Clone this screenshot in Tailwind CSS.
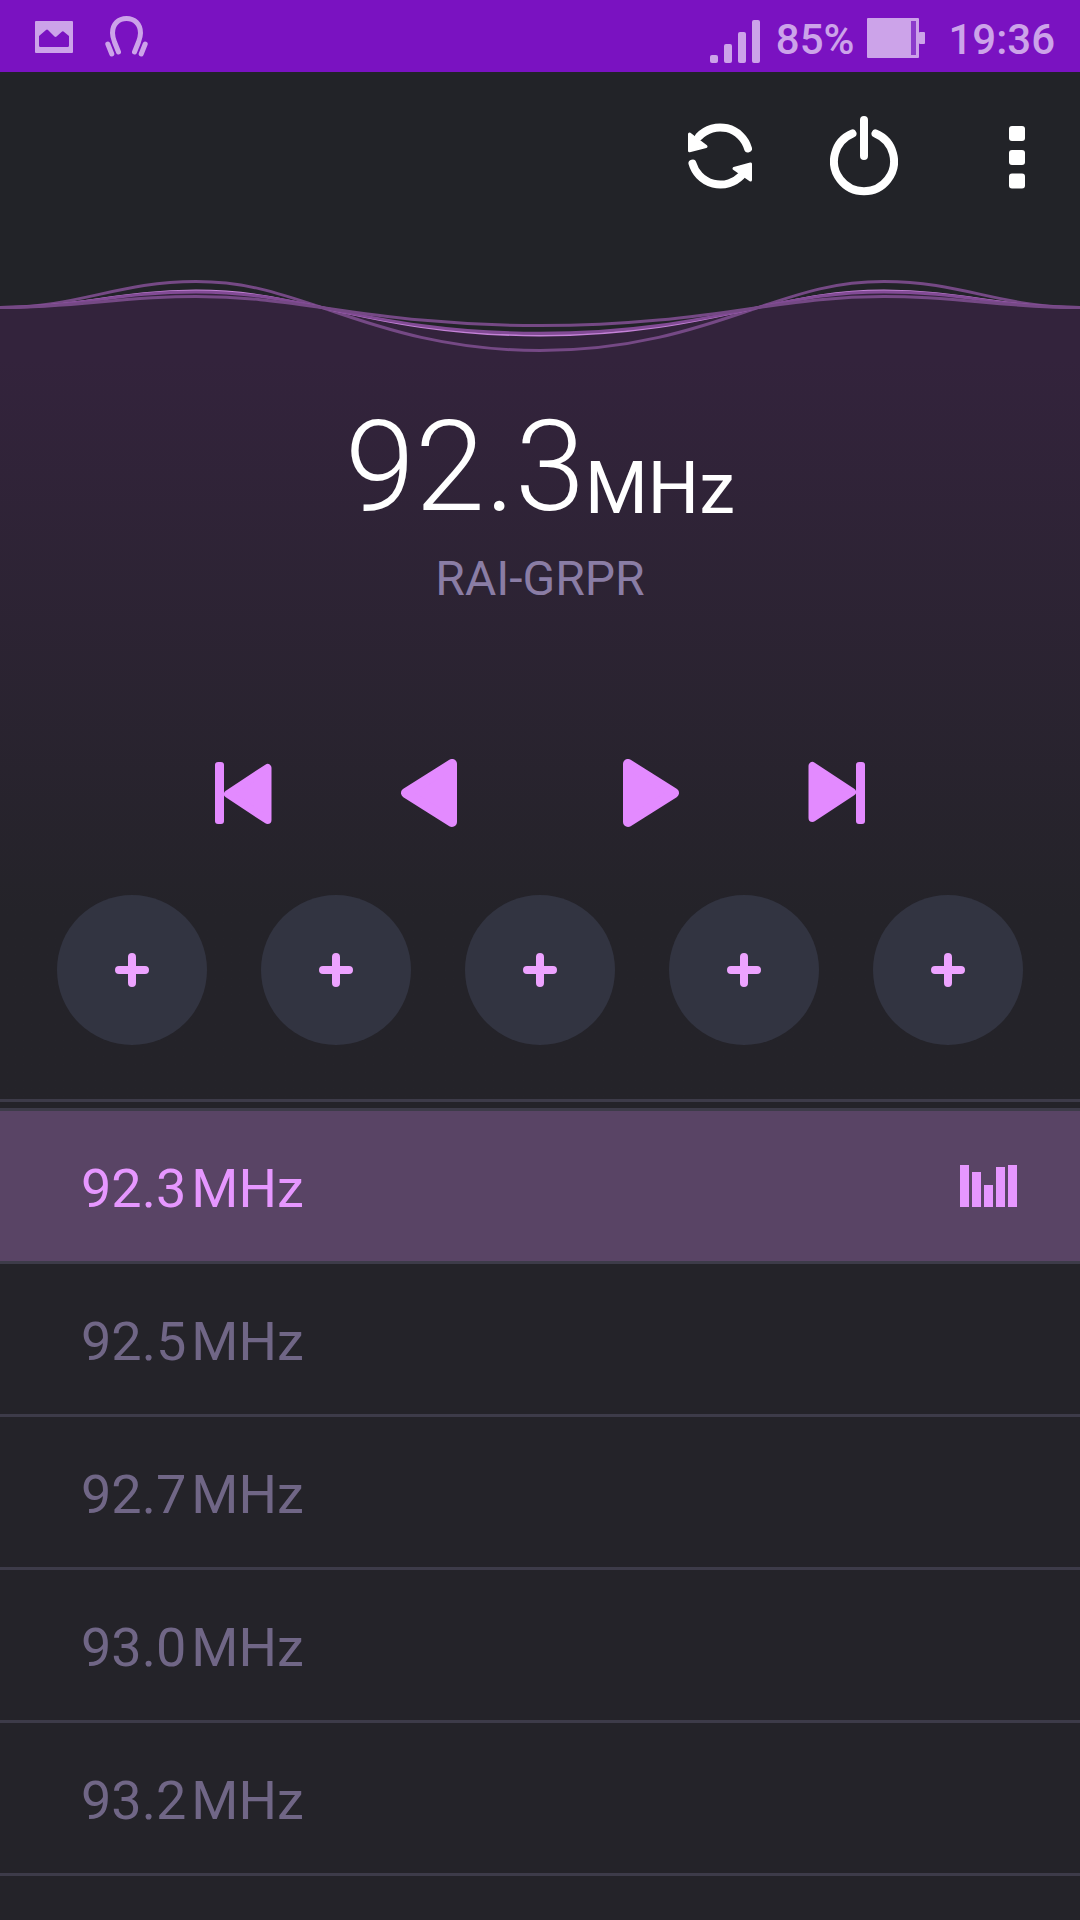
<!DOCTYPE html>
<html lang="en">
<head>
<meta charset="utf-8">
<meta name="viewport" content="width=device-width, initial-scale=1">
<title>FM Radio</title>
<script src="https://cdn.jsdelivr.net/npm/@tailwindcss/browser@4"></script>
</head>
<body class="min-h-screen bg-[#242329] font-[Roboto,sans-serif] text-white">

<!-- Status bar -->
<div class="flex h-[72px] items-center bg-[#7a12c1] pr-[25px] pl-[35px] text-[#cca3e9]">
  <svg class="h-[72px] w-[38px]" viewBox="0 0 38 72" fill="currentColor" aria-hidden="true">
    <path fill-rule="evenodd" d="M1 21H37Q38 21 38 22V52Q38 53 37 53H1Q0 53 0 52V22Q0 21 1 21ZM4 36V45.500Q4 47 5.500 47H32.500Q34 47 34 45.500V36L28.500 31.500Q27.500 31 26.500 32L21.500 36.500Q20.500 37.300 19.500 36.500L13 30Q12 29 11 30Z"/>
  </svg>
  <svg class="ml-8 h-[72px] w-[43px]" viewBox="0 0 43 72" fill="none" stroke="currentColor" stroke-width="5" stroke-linecap="round" aria-hidden="true">
    <path d="M13.500 52L9.500 42Q7.500 36.500 7.500 33C7.500 24 13.500 18.500 21.500 18.500S35.500 24 35.500 33Q35.500 36.500 33.500 42L29.500 52"/>
    <path d="M2.800 44L6.800 54M40.200 44L36.200 54"/>
  </svg>
  <div class="ml-auto flex items-center">
    <svg class="h-[72px] w-[50px]" viewBox="0 0 50 72" fill="currentColor" aria-hidden="true">
      <rect x="0" y="55" width="8" height="8" rx="2"/><rect x="14" y="44" width="8" height="19" rx="2"/><rect x="28" y="32" width="8" height="31" rx="2"/><rect x="42" y="20" width="8" height="43" rx="2"/>
    </svg>
    <span class="ml-4 pt-2 text-[42px] leading-none font-medium">85%</span>
    <svg class="ml-[13px] h-[72px] w-[58px]" viewBox="0 0 58 72" fill="currentColor" aria-hidden="true">
      <rect y="18" width="52" height="40" rx="1"/><rect x="52" y="32" width="6" height="12" rx="1"/><rect x="44" y="21" width="5" height="34" fill="#8b3ccb"/>
    </svg>
    <span class="ml-[23px] pt-2 text-[42px] leading-none font-medium">19:36</span>
  </div>
</div>

<!-- Toolbar -->
<header class="flex h-[188px] items-start justify-end bg-[#222328] pt-10 pr-[55px]">
  <button type="button" aria-label="Rescan stations">
    <svg class="h-[88px] w-16" viewBox="0 0 64 88" fill="none" stroke="#fff" stroke-width="8" stroke-linecap="round" aria-hidden="true">
      <path d="M11 24.500A29 29 0 0 1 60 36.500M4.500 51.500A29 29 0 0 0 53 64"/>
      <path fill="#fff" stroke-width="3" stroke-linejoin="round" d="M1.500 22L18 34.500L1.500 38.800ZM62.500 52V68L46 56.500Z"/>
    </svg>
  </button>
  <button type="button" aria-label="Power" class="ml-[78px]">
    <svg class="h-[88px] w-[68px]" viewBox="0 0 68 88" fill="none" stroke="#fff" stroke-width="8" stroke-linecap="round" aria-hidden="true">
      <path d="M22.500 21.500A30 30 0 1 0 45.500 21.500M34 8V44"/>
    </svg>
  </button>
  <button type="button" aria-label="More options" class="ml-[111px]">
    <svg class="h-[88px] w-4" viewBox="0 0 16 88" fill="#fff" aria-hidden="true">
      <rect y="14" width="16" height="15" rx="3"/><rect y="38" width="16" height="15" rx="3"/><rect y="61.500" width="16" height="15" rx="3"/>
    </svg>
  </button>
</header>

<!-- Sound wave -->
<svg class="block h-[100px] w-full bg-[#222328]" viewBox="0 0 1080 100" preserveAspectRatio="none" aria-hidden="true">
  <defs>
    <path id="wave" vector-effect="non-scaling-stroke" d="M0 0C80 0 118 -26 196 -26C246 -26 280 -14 325 1C385 22 450 43 540 43C630 43 695 22 755 1C800 -14 834 -26 884 -26C962 -26 1000 0 1080 0"/>
  </defs>
  <path fill="#33233c" transform="translate(0 47.500) scale(1 .62)" d="M0 0C80 0 118 -26 196 -26C246 -26 280 -14 325 1C385 22 450 43 540 43C630 43 695 22 755 1C800 -14 834 -26 884 -26C962 -26 1000 0 1080 0V90H0Z"/>
  <g fill="none" stroke="#754985" stroke-width="3">
    <use href="#wave" transform="translate(0 47.500)"/>
    <use href="#wave" transform="translate(0 47.500) scale(1 .65)" stroke="#c583d8" stroke-width="2"/>
    <use href="#wave" transform="translate(0 47.500) scale(1 .6)" stroke="#824b95"/>
    <use href="#wave" transform="translate(0 47.500) scale(1 .42)"/>
  </g>
</svg>

<main>
  <!-- Tuner -->
  <section class="border-b-3 border-[#3d3b49] bg-linear-to-b from-[#33233c] to-[#242329] to-75% pt-11 pb-[54px]">
    <h1 class="flex items-end justify-center">
      <span class="text-[126px] leading-[126px] font-light">92.3</span>
      <span class="mb-[5px] text-[72px] leading-[72px] font-normal">MHz</span>
    </h1>
    <p class="mt-[21px] text-center text-[48px] leading-[56px] text-[#8a7da5]">RAI-GRPR</p>

    <div class="mt-[152px] flex justify-center gap-[166px] text-[#e38aff]">
      <div class="flex gap-[129px]">
        <button type="button" aria-label="Previous station">
          <svg class="h-[68px] w-[57px]" viewBox="0 0 57 68" fill="currentColor" stroke="currentColor" stroke-linejoin="round" aria-hidden="true">
            <rect x="0" y="3" width="9" height="62" rx="3" stroke="none"/><path stroke-width="8" d="M13 35L52.500 9V61Z"/>
          </svg>
        </button>
        <button type="button" aria-label="Tune down">
          <svg class="h-[68px] w-14" viewBox="0 0 56 68" fill="currentColor" stroke="currentColor" stroke-width="10" stroke-linejoin="round" aria-hidden="true"><path d="M5 34L51 5V63Z"/></svg>
        </button>
      </div>
      <div class="flex gap-[129px]">
        <button type="button" aria-label="Tune up">
          <svg class="h-[68px] w-14" viewBox="0 0 56 68" fill="currentColor" stroke="currentColor" stroke-width="10" stroke-linejoin="round" aria-hidden="true"><path d="M51 34L5 5V63Z"/></svg>
        </button>
        <button type="button" aria-label="Next station">
          <svg class="h-[68px] w-[57px]" viewBox="0 0 57 68" fill="currentColor" stroke="currentColor" stroke-linejoin="round" aria-hidden="true">
            <rect x="48" y="3" width="9" height="62" rx="3" stroke="none"/><path stroke-width="8" d="M44 33L4.500 7V59Z"/>
          </svg>
        </button>
      </div>
    </div>

    <!-- Preset slots -->
    <div class="mt-[68px] flex justify-between px-[57px] text-[#eda3ff]">
      <button type="button" aria-label="Add preset 1" class="grid size-[150px] place-items-center rounded-full bg-[#323441]"><svg class="size-[34px]" viewBox="0 0 34 34" stroke="currentColor" stroke-width="8" stroke-linecap="round" aria-hidden="true"><path d="M4 17H30M17 4V30"/></svg></button>
      <button type="button" aria-label="Add preset 2" class="grid size-[150px] place-items-center rounded-full bg-[#323441]"><svg class="size-[34px]" viewBox="0 0 34 34" stroke="currentColor" stroke-width="8" stroke-linecap="round" aria-hidden="true"><path d="M4 17H30M17 4V30"/></svg></button>
      <button type="button" aria-label="Add preset 3" class="grid size-[150px] place-items-center rounded-full bg-[#323441]"><svg class="size-[34px]" viewBox="0 0 34 34" stroke="currentColor" stroke-width="8" stroke-linecap="round" aria-hidden="true"><path d="M4 17H30M17 4V30"/></svg></button>
      <button type="button" aria-label="Add preset 4" class="grid size-[150px] place-items-center rounded-full bg-[#323441]"><svg class="size-[34px]" viewBox="0 0 34 34" stroke="currentColor" stroke-width="8" stroke-linecap="round" aria-hidden="true"><path d="M4 17H30M17 4V30"/></svg></button>
      <button type="button" aria-label="Add preset 5" class="grid size-[150px] place-items-center rounded-full bg-[#323441]"><svg class="size-[34px]" viewBox="0 0 34 34" stroke="currentColor" stroke-width="8" stroke-linecap="round" aria-hidden="true"><path d="M4 17H30M17 4V30"/></svg></button>
    </div>
  </section>

  <!-- Station list -->
  <ul class="mt-1.5 border-t-3 border-[#3d3b49] text-[54px] leading-none text-[#706686]">
    <li class="border-b-3 border-[#3d3b49] bg-[#594465] text-[#e697ff]">
      <button type="button" aria-current="true" class="flex h-[150px] w-full items-center pr-[63px] pl-[81px] text-left">
        <span class="flex gap-[5px] pt-1.5"><span>92.3</span><span>MHz</span></span>
        <svg class="ml-auto h-[42px] w-[57px]" viewBox="0 0 57 42" fill="currentColor" aria-hidden="true">
          <path d="M0 0H9V42H0ZM12 7H21V42H12ZM24 20H33V42H24ZM36 2H45V42H36ZM48 0H57V42H48Z"/>
        </svg>
      </button>
    </li>
    <li class="border-b-3 border-[#3d3b49]"><button type="button" class="flex h-[150px] w-full items-center gap-[5px] pt-1.5 pl-[81px] text-left"><span>92.5</span><span>MHz</span></button></li>
    <li class="border-b-3 border-[#3d3b49]"><button type="button" class="flex h-[150px] w-full items-center gap-[5px] pt-1.5 pl-[81px] text-left"><span>92.7</span><span>MHz</span></button></li>
    <li class="border-b-3 border-[#3d3b49]"><button type="button" class="flex h-[150px] w-full items-center gap-[5px] pt-1.5 pl-[81px] text-left"><span>93.0</span><span>MHz</span></button></li>
    <li class="border-b-3 border-[#3d3b49]"><button type="button" class="flex h-[150px] w-full items-center gap-[5px] pt-1.5 pl-[81px] text-left"><span>93.2</span><span>MHz</span></button></li>
  </ul>
</main>
</body>
</html>
